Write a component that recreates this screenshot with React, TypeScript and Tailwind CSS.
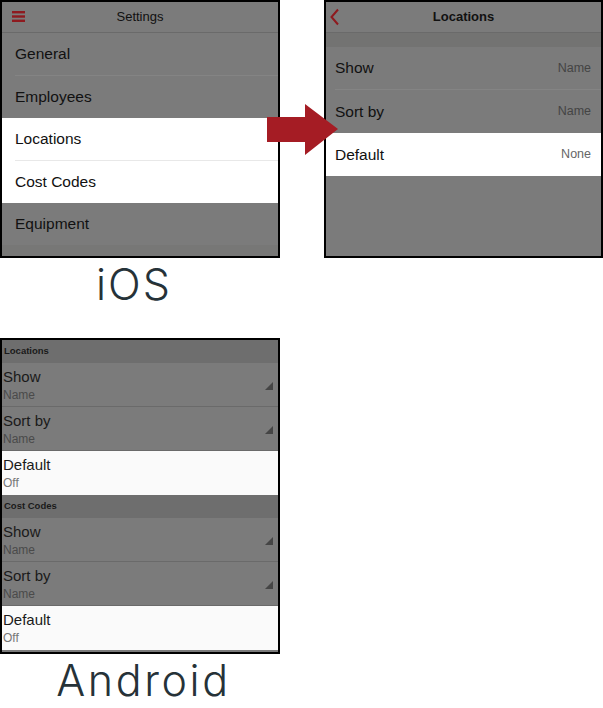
import React from "react";

const GRAY = "bg-[#7b7b7b]";

function Hamburger() {
  return (
    <svg width="13" height="11" viewBox="0 0 13 11" className="absolute left-[10px] top-[9px]">
      <rect x="0" y="0" width="13" height="2.4" fill="#8e1a1f" />
      <rect x="0" y="4.3" width="13" height="2.4" fill="#8e1a1f" />
      <rect x="0" y="8.6" width="13" height="2.4" fill="#8e1a1f" />
    </svg>
  );
}

function Chevron() {
  return (
    <svg width="11" height="18" viewBox="0 0 11 18" className="absolute left-[3px] top-[6px]">
      <polyline points="9,1.5 2.5,9 9,16.5" fill="none" stroke="#8e1a1f" strokeWidth="2" />
    </svg>
  );
}

function Tri() {
  return (
    <svg width="8" height="8" viewBox="0 0 8 8" className="absolute right-[5px] top-[19px]">
      <polygon points="8,0 8,8 0,8" fill="#454545" />
    </svg>
  );
}

function IosRow({ label, white, sep, h }: { label: string; white?: boolean; sep?: boolean; h: string }) {
  return (
    <div className={`${h} ${white ? "bg-white" : ""} pl-[13px] flex flex-col`}>
      <div className={`flex-1 flex items-center text-[15.5px] text-[#111] ${sep ? (white ? "border-b border-[#e8e8e8]" : "border-b border-[#848484]") : ""}`}>
        {label}
      </div>
    </div>
  );
}

function IosValRow({ label, value, white, sep }: { label: string; value: string; white?: boolean; sep?: boolean }) {
  return (
    <div className={`h-[43px] ${white ? "bg-white" : ""} pl-[9px] flex flex-col`}>
      <div className={`flex-1 flex items-center justify-between pr-[10px] ${sep ? "border-b border-[#848484]" : ""}`}>
        <span className="text-[15.5px] text-[#111]">{label}</span>
        <span className={`text-[12.5px] ${white ? "text-[#666]" : "text-[#444]"}`}>{value}</span>
      </div>
    </div>
  );
}

function AndRow({ title, sub, white, tri }: { title: string; sub: string; white?: boolean; tri?: boolean }) {
  return (
    <div className={`relative h-[44px] ${white ? "bg-[#fafafa]" : "border-b border-[#6a6a6a]"} pl-[1px] pt-[5px]`}>
      <div className="text-[15px] leading-[18px] text-[#1a1a1a]">{title}</div>
      <div className={`text-[12px] leading-[14px] mt-[2px] ${white ? "text-[#777]" : "text-[#4a4a4a]"}`}>{sub}</div>
      {tri && <Tri />}
    </div>
  );
}

function AndHeader({ label }: { label: string }) {
  return (
    <div className="h-[23px] bg-[#6e6e6e] flex items-center pl-[2px] text-[9.5px] font-bold text-[#1a1a1a]">{label}</div>
  );
}

export default function App() {
  return (
    <div
      className="relative w-[603px] h-[708px] bg-white overflow-hidden"
      style={{ fontFamily: '"Liberation Sans", Arial, sans-serif' }}
    >
      <div className="flex">
        {/* iOS settings */}
        <div className={`w-[280px] h-[258px] border-2 border-black ${GRAY} flex flex-col`}>
          <div className="relative h-[31px] border-b border-[#6a6a6a] flex items-center justify-center text-[13px] text-[#111]">
            <Hamburger />
            Settings
          </div>
          <IosRow label="General" h="h-[43px]" sep />
          <IosRow label="Employees" h="h-[42px]" />
          <IosRow label="Locations" h="h-[43px]" white sep />
          <IosRow label="Cost Codes" h="h-[42px]" white />
          <IosRow label="Equipment" h="h-[42px]" />
          <div className="flex-1 bg-[#777776]" />
        </div>
        {/* iOS locations */}
        <div className={`ml-[44px] w-[279px] h-[258px] border-2 border-black ${GRAY} flex flex-col`}>
          <div className="relative h-[31px] border-b border-[#6a6a6a] flex items-center justify-center text-[13px] font-bold text-[#111]">
            <Chevron />
            Locations
          </div>
          <div className="h-[14px] bg-[#737372]" />
          <IosValRow label="Show" value="Name" sep />
          <IosValRow label="Sort by" value="Name" />
          <IosValRow label="Default" value="None" white />
          <div className="flex-1" />
        </div>
      </div>

      {/* arrow */}
      <svg width="72" height="52" viewBox="0 0 72 52" className="absolute left-[267px] top-[104px]">
        <polygon points="0,13 38,13 38,0 71,25 38,51 38,38 0,38" fill="#a51c24" />
      </svg>

      <div className="w-[268px] h-[80px] flex justify-center">
        <span className="text-[43px] leading-[52px] font-light tracking-[2px] text-[#263238]" style={{ fontFamily: "Inter, sans-serif" }}>
          iOS
        </span>
      </div>

      {/* Android */}
      <div className={`w-[280px] h-[316px] border-2 border-black ${GRAY} flex flex-col`}>
        <AndHeader label="Locations" />
        <AndRow title="Show" sub="Name" tri />
        <AndRow title="Sort by" sub="Name" tri />
        <AndRow title="Default" sub="Off" white />
        <AndHeader label="Cost Codes" />
        <AndRow title="Show" sub="Name" tri />
        <AndRow title="Sort by" sub="Name" tri />
        <AndRow title="Default" sub="Off" white />
      </div>
      <div className="w-[287px] flex justify-center">
        <span className="text-[43px] leading-[52px] font-light tracking-[2.6px] text-[#263238]" style={{ fontFamily: "Inter, sans-serif" }}>
          Android
        </span>
      </div>
    </div>
  );
}
